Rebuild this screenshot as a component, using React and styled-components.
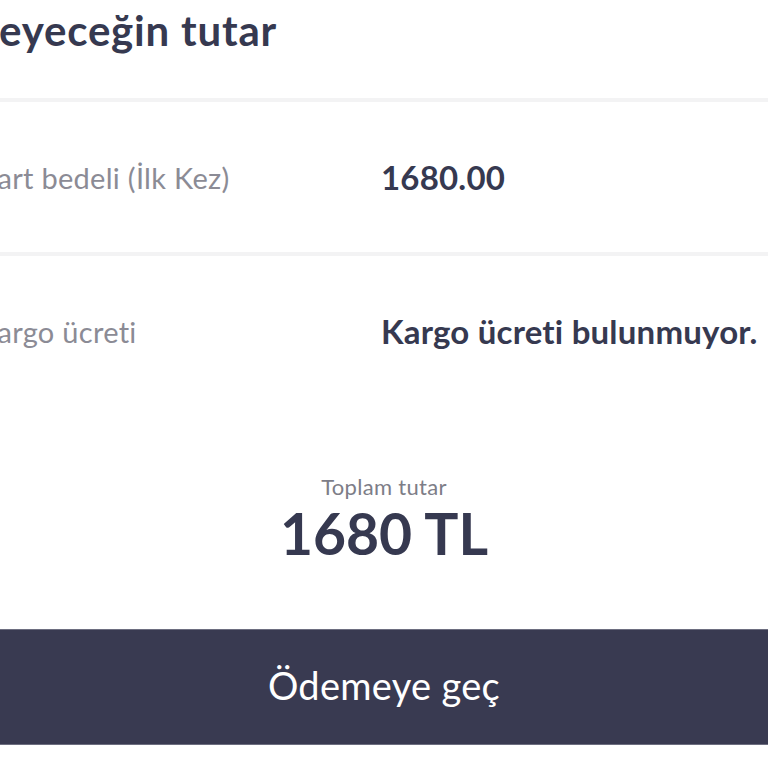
import React from 'react';
import styled, { createGlobalStyle } from 'styled-components';

const GlobalStyle = createGlobalStyle`
    html, body {
        margin : 0;
        padding : 0;
        background : #ffffff;
        overflow : hidden;
    }
    body {
        font-family : Lato, "Noto Sans", sans-serif;
        color : #363950;
    }
`

const Page = styled.div`
    width : 768px;
    height : 768px;
    display : flex;
    flex-direction : column;
    overflow : hidden;
`

const Title = styled.h1`
    margin : 0;
    height : 98px;
    margin-left : -60px;
    display : flex;
    align-items : center;
    padding-bottom : 38px;
    box-sizing : border-box;
    font-size : 42px;
    font-weight : 700;
    letter-spacing : 0.8px;
    color : #363950;
    white-space : nowrap;
`

const Divider = styled.div`
    height : 4px;
    background : #f3f3f4;
    margin-left : -20px;
`

const Row = styled.div`
    display : grid;
    grid-template-columns : 403px 1fr;
    align-items : center;
    height : ${props => props.height}px;
    margin-left : -22px;
`

const Label = styled.span`
    font-size : 29px;
    font-weight : 400;
    color : #8b8b95;
    white-space : nowrap;
    letter-spacing : 0.3px;
`

const Value = styled.span`
    font-size : 33px;
    font-weight : 700;
    color : #363950;
    white-space : nowrap;
    letter-spacing : 0.2px;
`

const Total = styled.div`
    display : flex;
    flex-direction : column;
    align-items : center;
    padding-top : 68px;
    height : 223px;
    box-sizing : border-box;
`

const TotalLabel = styled.span`
    font-size : 22px;
    line-height : 1.2;
    color : #7d7d87;
    letter-spacing : 0.3px;
`

const TotalValue = styled.span`
    font-size : 57px;
    font-weight : 700;
    line-height : 1.1;
    color : #363950;
    margin-top : 2px;
`

const PayButton = styled.button`
    display : flex;
    align-items : center;
    justify-content : center;
    width : 100%;
    height : 116px;
    border : none;
    border-top : 1px solid #6d6e80;
    border-bottom : 1px solid #6d6e80;
    background : #393a51;
    color : #ffffff;
    font-family : Lato, "Noto Sans", sans-serif;
    font-size : 38px;
    font-weight : 400;
    letter-spacing : 0.3px;
    padding : 0 0 4px;
    cursor : pointer;
`

export default function App(){
    return(
        <Page>
            <GlobalStyle/>
            <Title>Ödeyeceğin tutar</Title>
            <Divider/>
            <Row height={150}>
                <Label>Kart bedeli (İlk Kez)</Label>
                <Value>1680.00</Value>
            </Row>
            <Divider/>
            <Row height={150}>
                <Label>Kargo ücreti</Label>
                <Value>Kargo ücreti bulunmuyor.</Value>
            </Row>
            <Total>
                <TotalLabel>Toplam tutar</TotalLabel>
                <TotalValue>1680 TL</TotalValue>
            </Total>
            <PayButton>Ödemeye geç</PayButton>
        </Page>
    )
}
